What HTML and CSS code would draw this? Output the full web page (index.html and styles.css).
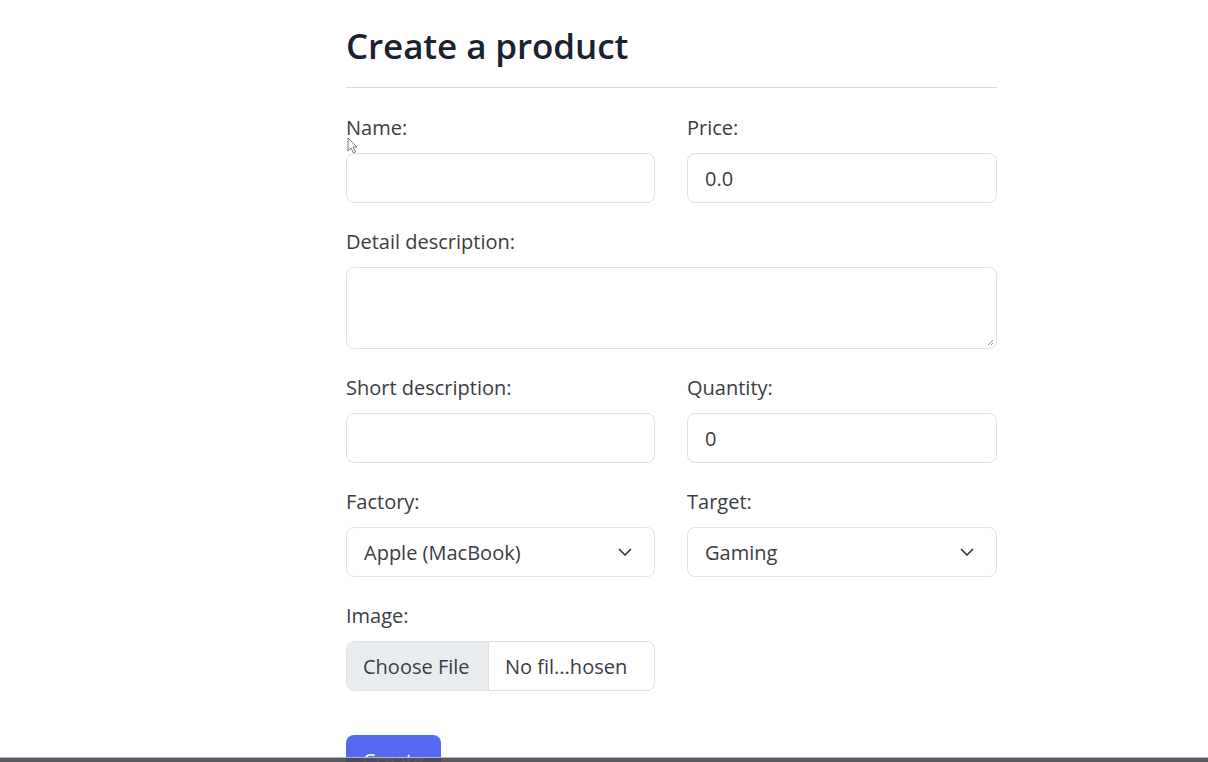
FILE: index.html
```html
<!DOCTYPE html>
<html lang="en">
<head>
<meta charset="utf-8">
<title>Create a product</title>
<link rel="stylesheet" href="styles.css">
</head>
<body>
<main class="page">
  <h3 class="title">Create a product</h3>
  <hr class="rule">
  <form class="form">
    <div class="row">
      <div class="field">
        <label class="label">Name:</label>
        <input class="control" type="text">
      </div>
      <div class="field">
        <label class="label">Price:</label>
        <input class="control" type="text" value="0.0">
      </div>
    </div>
    <div class="field">
      <label class="label">Detail description:</label>
      <div class="control textarea"><svg class="grip" width="8" height="8" viewBox="0 0 8 8"><path d="M7 2 L2 7 M7 5 L5 7" stroke="#9a9a9a" stroke-width="1"/></svg></div>
    </div>
    <div class="row">
      <div class="field">
        <label class="label">Short description:</label>
        <input class="control" type="text">
      </div>
      <div class="field">
        <label class="label">Quantity:</label>
        <input class="control" type="text" value="0">
      </div>
    </div>
    <div class="row">
      <div class="field">
        <label class="label">Factory:</label>
        <div class="control select"><span>Apple (MacBook)</span><svg class="chev" width="14" height="9" viewBox="0 0 14 9"><path d="M1.5 1.5 L7 7 L12.5 1.5" fill="none" stroke="#343a40" stroke-width="1.7" stroke-linecap="round" stroke-linejoin="round"/></svg></div>
      </div>
      <div class="field">
        <label class="label">Target:</label>
        <div class="control select"><span>Gaming</span><svg class="chev" width="14" height="9" viewBox="0 0 14 9"><path d="M1.5 1.5 L7 7 L12.5 1.5" fill="none" stroke="#343a40" stroke-width="1.7" stroke-linecap="round" stroke-linejoin="round"/></svg></div>
      </div>
    </div>
    <div class="row">
      <div class="field">
        <label class="label">Image:</label>
        <div class="control file"><span class="file-btn">Choose File</span><span class="file-name">No fil...hosen</span></div>
      </div>
    </div>
    <div class="actions">
      <span class="btn">Create</span>
    </div>
  </form>
  <svg class="cursor" width="12" height="18" viewBox="0 0 12 18"><path d="M1 1 L1 14 L4 11 L6.5 16 L8.5 15 L6 10 L10 10 Z" fill="#fff" stroke="#777" stroke-width="1" stroke-linejoin="round"/></svg>
</main>
<div class="taskbar"></div>
</body>
</html>
```

FILE: styles.css
```css
html, body {
  margin: 0;
  padding: 0;
  background: #fff;
  height: 100%;
  overflow: hidden;
}
body {
  font-family: "Open Sans", "Noto Sans", sans-serif;
  color: #212529;
}
.page {
  position: relative;
  width: 651px;
  margin-left: 346px;
  padding-top: 21px;
}
.title {
  margin: 0;
  font-size: 35px;
  font-weight: 600;
  line-height: 50px;
  color: #1a2230;
  letter-spacing: -0.1px;
}
.rule {
  margin: 16px 0 0;
  border: 0;
  border-top: 1px solid #d9dadc;
}
.form {
  display: flex;
  flex-direction: column;
  gap: 24px;
  padding-top: 25px;
}
.row {
  display: grid;
  grid-template-columns: 309px 310px;
  column-gap: 32px;
}
.field {
  display: flex;
  flex-direction: column;
}
.label {
  font-size: 20px;
  line-height: 30px;
  margin-bottom: 10px;
  color: #3a3d42;
}
.control {
  box-sizing: border-box;
  height: 50px;
  border: 1px solid #dee2e6;
  border-radius: 8px;
  background: #fff;
  font-family: inherit;
  font-size: 20px;
  color: #3a3d42;
  padding: 0 17px;
  outline: none;
  display: flex;
  align-items: center;
}
.textarea {
  height: 82px;
  position: relative;
}
.grip {
  position: absolute;
  right: 2px;
  bottom: 2px;
}
.select {
  justify-content: space-between;
  padding-right: 22px;
}
.file {
  padding: 0;
  overflow: hidden;
}
.file-btn {
  height: 100%;
  display: flex;
  align-items: center;
  padding: 0 16px;
  background: #e9ecef;
  border-right: 1px solid #dee2e6;
  width: 142px;
  box-sizing: border-box;
}
.file-name {
  padding-left: 16px;
}
.actions {
  padding-top: 20px;
}
.btn {
  display: inline-flex;
  align-items: center;
  justify-content: center;
  width: 95px;
  height: 50px;
  border-radius: 8px;
  background: #5568f2;
  color: #fff;
  font-size: 20px;
}
.cursor {
  position: absolute;
  left: 1px;
  top: 137px;
}
.taskbar {
  position: fixed;
  left: 0;
  right: 0;
  bottom: 0;
  height: 4px;
  background: rgba(70, 72, 75, 0.9);
  border-top: 1px solid rgba(190, 190, 190, 0.9);
}
```
